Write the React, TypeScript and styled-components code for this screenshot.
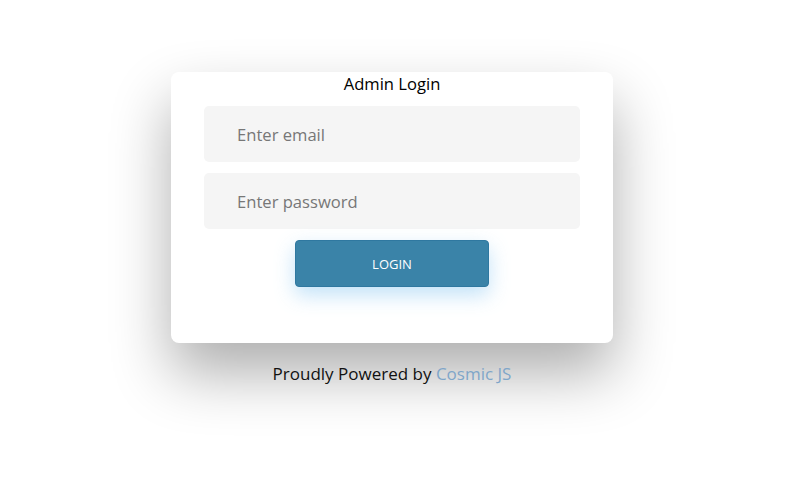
import React from "react";
import styled, { createGlobalStyle } from "styled-components";

const Global = createGlobalStyle`
  html, body { margin: 0; padding: 0; background: #ffffff; }
  body { font-family: "Open Sans", "Noto Sans", sans-serif; }
  * { box-sizing: border-box; }
`;

const Page = styled.div`
  display: flex;
  flex-direction: column;
  align-items: center;
  padding: 72px 16px 0 0;
  width: 800px;
  height: 485px;
`;

const Card = styled.div`
  width: 442px;
  height: 271px;
  background: #ffffff;
  border-radius: 8px;
  box-shadow: 0 30px 60px rgba(0, 0, 0, 0.32);
  display: flex;
  flex-direction: column;
  align-items: center;
  padding: 0 33px;
`;

const Title = styled.div`
  font-size: 16.6px;
  line-height: 22px;
  color: #000;
  margin-top: 1px;
  margin-bottom: 11px;
  font-weight: 500;
`;

const Input = styled.input`
  width: 376px;
  height: 56px;
  border: none;
  outline: none;
  border-radius: 5px;
  background: #f5f5f5;
  padding: 0 0 0 33px;
  margin-bottom: 11px;
  font-family: "Open Sans", sans-serif;
  font-size: 16.6px;
  color: #333;
  &::placeholder { color: #777777; }
`;

const Button = styled.button`
  width: 194px;
  height: 47px;
  background: #3a83a8;
  border: 1px solid #2f78a0;
  border-radius: 4px;
  color: #ffffff;
  font-family: "Open Sans", sans-serif;
  font-size: 13px;
  box-shadow: 0 8px 20px rgba(120, 190, 240, 0.45);
  cursor: pointer;
`;

const Footer = styled.div`
  margin-top: 20px;
  font-size: 17px;
  color: #111;
  line-height: 22px;
`;

const Link = styled.span`
  color: #7fa6c9;
`;

export default function App() {
  return (
    <>
      <Global />
      <Page>
        <Card>
          <Title>Admin Login</Title>
          <Input type="email" placeholder="Enter email" />
          <Input type="password" placeholder="Enter password" />
          <Button>LOGIN</Button>
        </Card>
        <Footer>
          Proudly Powered by <Link>Cosmic JS</Link>
        </Footer>
      </Page>
    </>
  );
}
